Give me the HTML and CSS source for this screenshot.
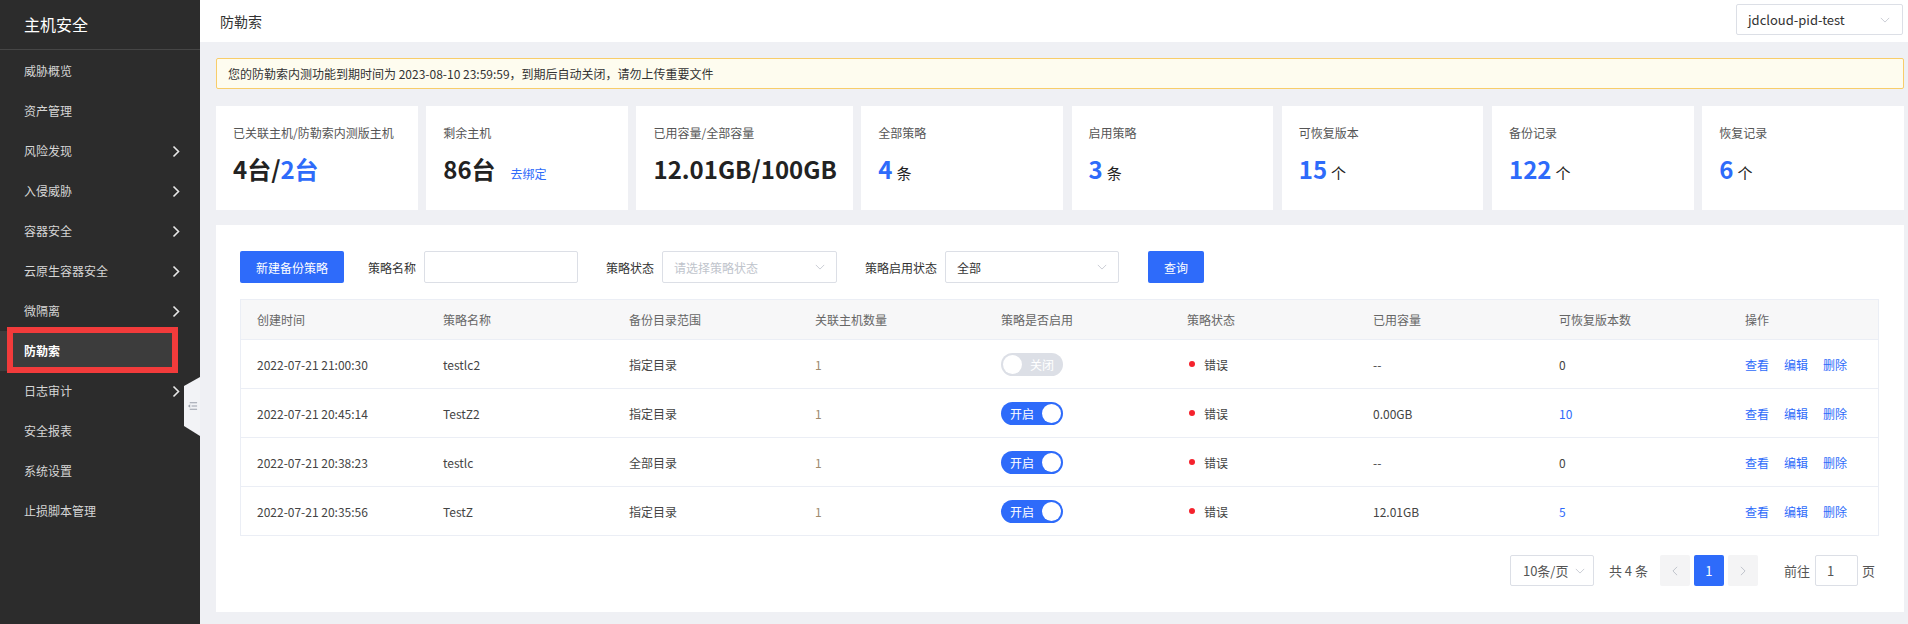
FILE: index.html
```html
<!DOCTYPE html>
<html lang="zh-CN">
<head>
<meta charset="utf-8">
<title>防勒索</title>
<link rel="stylesheet" href="styles.css">
</head>
<body>
<div class="app">
  <aside class="sidebar">
    <div class="brand">主机安全</div>
    <ul class="menu">
      <li class="menu-item">威胁概览</li>
      <li class="menu-item">资产管理</li>
      <li class="menu-item">风险发现<svg class="chev" viewBox="0 0 8 13"><path d="M1.5 1.5 L6.5 6.5 L1.5 11.5"/></svg></li>
      <li class="menu-item">入侵威胁<svg class="chev" viewBox="0 0 8 13"><path d="M1.5 1.5 L6.5 6.5 L1.5 11.5"/></svg></li>
      <li class="menu-item">容器安全<svg class="chev" viewBox="0 0 8 13"><path d="M1.5 1.5 L6.5 6.5 L1.5 11.5"/></svg></li>
      <li class="menu-item">云原生容器安全<svg class="chev" viewBox="0 0 8 13"><path d="M1.5 1.5 L6.5 6.5 L1.5 11.5"/></svg></li>
      <li class="menu-item">微隔离<svg class="chev" viewBox="0 0 8 13"><path d="M1.5 1.5 L6.5 6.5 L1.5 11.5"/></svg></li>
      <li class="menu-item active">防勒索</li>
      <li class="menu-item">日志审计<svg class="chev" viewBox="0 0 8 13"><path d="M1.5 1.5 L6.5 6.5 L1.5 11.5"/></svg></li>
      <li class="menu-item">安全报表</li>
      <li class="menu-item">系统设置</li>
      <li class="menu-item">止损脚本管理</li>
    </ul>
    <div class="annot"></div>
    <div class="collapse-tab">
      <svg viewBox="0 0 12 10" class="collapse-icon"><path d="M3 1.5 H11 M5 5 H11 M3 8.5 H11" stroke="#9aa0aa" stroke-width="1.2" fill="none"/><path d="M1 5 L3.5 3 V7 Z" fill="#9aa0aa"/></svg>
    </div>
  </aside>

  <main class="main">
    <header class="topbar">
      <div class="page-title">防勒索</div>
      <div class="region-select">
        <span>jdcloud-pid-test</span>
        <svg class="down" viewBox="0 0 12 7"><path d="M1 1 L6 6 L11 1"/></svg>
      </div>
    </header>

    <div class="content">
      <div class="alert">您的防勒索内测功能到期时间为 2023-08-10 23:59:59，到期后自动关闭，请勿上传重要文件</div>

      <div class="stats">
        <div class="card">
          <div class="card-label">已关联主机/防勒索内测版主机</div>
          <div class="card-value">4台/<span class="blue">2台</span></div>
        </div>
        <div class="card">
          <div class="card-label">剩余主机</div>
          <div class="card-value">86台<a class="unbind">去绑定</a></div>
        </div>
        <div class="card">
          <div class="card-label">已用容量/全部容量</div>
          <div class="card-value">12.01GB/100GB</div>
        </div>
        <div class="card">
          <div class="card-label">全部策略</div>
          <div class="card-value"><span class="num">4</span><span class="unit">条</span></div>
        </div>
        <div class="card">
          <div class="card-label">启用策略</div>
          <div class="card-value"><span class="num">3</span><span class="unit">条</span></div>
        </div>
        <div class="card">
          <div class="card-label">可恢复版本</div>
          <div class="card-value"><span class="num">15</span><span class="unit">个</span></div>
        </div>
        <div class="card">
          <div class="card-label">备份记录</div>
          <div class="card-value"><span class="num">122</span><span class="unit">个</span></div>
        </div>
        <div class="card">
          <div class="card-label">恢复记录</div>
          <div class="card-value"><span class="num">6</span><span class="unit">个</span></div>
        </div>
      </div>

      <section class="panel">
        <div class="toolbar">
          <button class="btn btn-primary btn-new">新建备份策略</button>
          <label class="f-label f-first">策略名称</label>
          <div class="input name-input"></div>
          <label class="f-label">策略状态</label>
          <div class="input select status-select"><span class="placeholder">请选择策略状态</span><svg class="down" viewBox="0 0 12 7"><path d="M1 1 L6 6 L11 1"/></svg></div>
          <label class="f-label">策略启用状态</label>
          <div class="input select enable-select"><span>全部</span><svg class="down" viewBox="0 0 12 7"><path d="M1 1 L6 6 L11 1"/></svg></div>
          <button class="btn btn-primary btn-query">查询</button>
        </div>

        <div class="table">
          <div class="tr thead">
            <div class="td">创建时间</div>
            <div class="td">策略名称</div>
            <div class="td">备份目录范围</div>
            <div class="td">关联主机数量</div>
            <div class="td">策略是否启用</div>
            <div class="td">策略状态</div>
            <div class="td">已用容量</div>
            <div class="td">可恢复版本数</div>
            <div class="td">操作</div>
          </div>
          <div class="tr">
            <div class="td">2022-07-21 21:00:30</div>
            <div class="td">testlc2</div>
            <div class="td">指定目录</div>
            <div class="td muted">1</div>
            <div class="td"><span class="switch off"><span class="knob"></span><span class="sw-text">关闭</span></span></div>
            <div class="td"><span class="dot"></span>错误</div>
            <div class="td">--</div>
            <div class="td">0</div>
            <div class="td ops"><a>查看</a><a>编辑</a><a>删除</a></div>
          </div>
          <div class="tr">
            <div class="td">2022-07-21 20:45:14</div>
            <div class="td">TestZ2</div>
            <div class="td">指定目录</div>
            <div class="td muted">1</div>
            <div class="td"><span class="switch on"><span class="sw-text">开启</span><span class="knob"></span></span></div>
            <div class="td"><span class="dot"></span>错误</div>
            <div class="td">0.00GB</div>
            <div class="td blue">10</div>
            <div class="td ops"><a>查看</a><a>编辑</a><a>删除</a></div>
          </div>
          <div class="tr">
            <div class="td">2022-07-21 20:38:23</div>
            <div class="td">testlc</div>
            <div class="td">全部目录</div>
            <div class="td muted">1</div>
            <div class="td"><span class="switch on"><span class="sw-text">开启</span><span class="knob"></span></span></div>
            <div class="td"><span class="dot"></span>错误</div>
            <div class="td">--</div>
            <div class="td">0</div>
            <div class="td ops"><a>查看</a><a>编辑</a><a>删除</a></div>
          </div>
          <div class="tr">
            <div class="td">2022-07-21 20:35:56</div>
            <div class="td">TestZ</div>
            <div class="td">指定目录</div>
            <div class="td muted">1</div>
            <div class="td"><span class="switch on"><span class="sw-text">开启</span><span class="knob"></span></span></div>
            <div class="td"><span class="dot"></span>错误</div>
            <div class="td">12.01GB</div>
            <div class="td blue">5</div>
            <div class="td ops"><a>查看</a><a>编辑</a><a>删除</a></div>
          </div>
        </div>

        <div class="pager">
          <div class="input select size-select"><span>10条/页</span><svg class="down" viewBox="0 0 12 7"><path d="M1 1 L6 6 L11 1"/></svg></div>
          <span class="total">共 4 条</span>
          <span class="pg-btn"><svg viewBox="0 0 7 12"><path d="M6 1 L1 6 L6 11"/></svg></span>
          <span class="pg-num">1</span>
          <span class="pg-btn"><svg viewBox="0 0 7 12"><path d="M1 1 L6 6 L1 11"/></svg></span>
          <span class="goto">前往</span>
          <div class="input goto-input">1</div>
          <span class="page-unit">页</span>
        </div>
      </section>
    </div>
  </main>
</div>
</body>
</html>
```

FILE: styles.css
```css
* { box-sizing: border-box; }
html, body { margin: 0; padding: 0; }
body {
  font-family: "Noto Sans CJK SC", "Noto Sans", sans-serif;
  font-size: 12px;
  color: #333;
  background: #eff0f4;
}
.app { display: flex; width: 1908px; height: 624px; overflow: hidden; }

/* sidebar */
.sidebar {
  position: relative;
  width: 200px;
  flex: 0 0 200px;
  background: #2c2c2c;
  color: #d9d9d9;
}
.brand {
  height: 50px;
  line-height: 48px;
  padding-left: 24px;
  font-size: 16px;
  color: #fff;
  border-bottom: 1px solid #464646;
}
.menu { list-style: none; margin: 1px 0 0; padding: 0; }
.menu-item {
  position: relative;
  height: 40px;
  line-height: 40px;
  padding-left: 24px;
  font-size: 12px;
  color: #d6d6d6;
}
.menu-item.active { background: #3c3c3c; color: #fff; font-weight: bold; margin-right: 22px; }
.chev {
  position: absolute;
  right: 20px;
  top: 14px;
  width: 8px;
  height: 13px;
  fill: none;
  stroke: #e8e8e8;
  stroke-width: 1.6;
}
.annot {
  position: absolute;
  left: 7px;
  top: 327px;
  width: 171px;
  height: 46px;
  border: 6px solid #f23b3b;
}
.collapse-tab {
  position: absolute;
  left: 184px;
  top: 377px;
  width: 16px;
  height: 59px;
  background: #f2f3f6;
  clip-path: polygon(0 9px, 100% 0, 100% 100%, 0 49px);
  display: flex;
  align-items: center;
  justify-content: center;
}
.collapse-icon { width: 11px; height: 10px; margin-top: -2px; }

/* main */
.main { flex: 1; display: flex; flex-direction: column; min-width: 0; }
.topbar {
  height: 42px;
  flex: 0 0 42px;
  background: #fff;
  display: flex;
  align-items: center;
  justify-content: space-between;
  padding: 0 5px 0 20px;
}
.page-title { font-size: 14px; color: #333; }
.region-select {
  width: 167px;
  height: 31px;
  margin-top: -3px;
  border: 1px solid #dcdfe6;
  border-radius: 2px;
  display: flex;
  align-items: center;
  justify-content: space-between;
  padding: 0 12px 0 11px;
  font-size: 13px;
  color: #333;
}
.down { width: 10px; height: 6px; fill: none; stroke: #c0c4cc; stroke-width: 1; }

.content { padding: 16px 4px 0 16px; }
.alert {
  height: 31px;
  line-height: 29px;
  border: 1px solid #f8cd6a;
  background: #fefcef;
  border-radius: 2px;
  padding-left: 11px;
  font-size: 12px;
  color: #333;
}

.stats { display: flex; gap: 8.5px; margin-top: 17px; height: 104px; }
.card {
  flex: 1 1 0;
  background: #fff;
  padding: 17px 16px 0 17px;
}
.card-label { font-size: 12px; color: #555; line-height: 20px; }
.card-value {
  margin-top: 9px;
  font-size: 24px;
  font-weight: bold;
  color: #222;
  line-height: 34px;
  white-space: nowrap;
  display: flex;
  align-items: baseline;
}
.blue { color: #2e6bfa; }
.unbind { font-size: 12px; font-weight: normal; color: #2e6bfa; margin-left: 15px; }
.num { color: #2e6bfa; }
.unit { font-size: 15px; font-weight: normal; color: #222; margin-left: 4px; }

/* panel */
.panel {
  margin-top: 15px;
  background: #fff;
  padding: 26px 25px 27px 24px;
  height: 387px;
}
.toolbar { display: flex; align-items: center; height: 32px; }
.btn {
  height: 32px;
  border: none;
  border-radius: 2px;
  font-family: inherit;
  font-size: 12px;
  padding: 0;
}
.btn-primary { background: #2e6bfa; color: #fff; }
.btn-new { width: 104px; }
.btn-query { width: 56px; margin-left: 29px; }
.f-label { font-size: 12px; color: #333; margin-left: 28px; margin-right: 8px; }
.f-label.f-first { margin-left: 24px; }
.input {
  height: 32px;
  border: 1px solid #dcdfe6;
  border-radius: 2px;
  background: #fff;
  font-size: 12px;
  color: #333;
}
.select {
  display: flex;
  align-items: center;
  justify-content: space-between;
  padding: 0 11px 0 11px;
}
.name-input { width: 154px; }
.status-select { width: 175px; }
.enable-select { width: 174px; }
.placeholder { color: #c0c4cc; }

.table {
  margin-top: 16px;
  border: 1px solid #ebeef5;
  border-bottom: none;
}
.tr {
  display: grid;
  grid-template-columns: repeat(8, 186px) 1fr;
  height: 49px;
  border-bottom: 1px solid #ebeef5;
  align-items: center;
  background: #fff;
}
.thead { height: 40px; background: #f7f7f8; }
.thead .td { color: #666; }
.td {
  padding-left: 16px;
  font-size: 12px;
  color: #444;
  display: flex;
  align-items: center;
  white-space: nowrap;
}
.td.muted { color: #a08b6e; }
.td.blue { color: #2e6bfa; }
.dot {
  width: 6px;
  height: 6px;
  border-radius: 50%;
  background: #f5222d;
  margin: 0 9px 0 2px;
}
.ops a { color: #2e6bfa; margin-right: 15px; cursor: pointer; }

.switch {
  width: 62px;
  height: 23px;
  border-radius: 12px;
  display: flex;
  align-items: center;
  padding: 0 2px;
  justify-content: space-between;
}
.switch .knob {
  width: 19px;
  height: 19px;
  border-radius: 50%;
  background: #fff;
}
.switch .sw-text { color: #fff; font-size: 12px; }
.switch.on { background: #2e6bfa; padding-left: 9px; }
.switch.off { background: #dcdfe6; padding-right: 9px; }

.pager {
  display: flex;
  align-items: center;
  justify-content: flex-end;
  margin-top: 19px;
  height: 31px;
  padding-right: 4px;
  font-size: 13px;
  color: #555;
}
.size-select { width: 84px; height: 31px; padding: 0 8px 0 12px; font-size: 13px; color: #555; }
.total { margin-left: 15px; margin-right: 12px; }
.pg-btn, .pg-num {
  width: 30px;
  height: 31px;
  border-radius: 2px;
  display: flex;
  align-items: center;
  justify-content: center;
  margin-right: 4px;
}
.pg-btn { background: #f4f4f5; }
.pg-btn svg { width: 6px; height: 10px; fill: none; stroke: #c0c4cc; stroke-width: 1.2; }
.pg-num { background: #2e6bfa; color: #fff; font-size: 13px; }
.goto { margin-left: 22px; margin-right: 5px; }
.goto-input { width: 43px; height: 31px; line-height: 29px; padding-left: 11px; font-size: 13px; color: #555; }
.page-unit { margin-left: 4px; }
```
